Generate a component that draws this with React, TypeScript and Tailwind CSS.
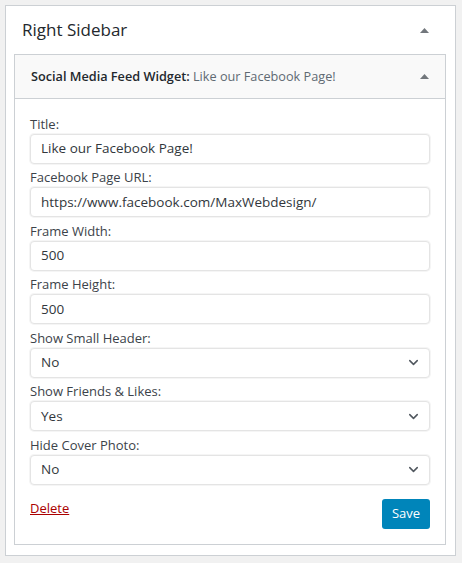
import { ChevronDown } from "lucide-react"

const font = { fontFamily: '"Open Sans", "Noto Sans", sans-serif' }

function Caret() {
    return (
        <svg width="9" height="5" viewBox="0 0 9 5" className="block">
            <path d="M0 5 L4.5 0 L9 5 Z" fill="#72777c" />
        </svg>
    )
}

function TextField({ label, value }: { label: string; value: string }) {
    return (
        <div>
            <label className="flex h-[23.5px] items-end pb-[1px] text-[13px] leading-[18px] text-[#3c434a]">{label}</label>
            <div className="flex h-[30px] items-center rounded-[4px] border border-[#e4e4e4] bg-white px-[10px] text-[13.5px] text-[#32373c] shadow-[0_0_0_1px_#f5f5f5]">
                {value}
            </div>
        </div>
    )
}

function SelectField({ label, value }: { label: string; value: string }) {
    return (
        <div>
            <label className="flex h-[23.5px] items-end pb-[1px] text-[13px] leading-[18px] text-[#3c434a]">{label}</label>
            <div className="flex h-[30px] items-center justify-between rounded-[4px] border border-[#e4e4e4] bg-white pl-[10px] pr-[8px] text-[13.5px] text-[#32373c] shadow-[0_0_0_1px_#f5f5f5]">
                <span>{value}</span>
                <ChevronDown className="h-[15px] w-[15px] text-[#50575e]" strokeWidth={2.4} />
            </div>
        </div>
    )
}

export default function App() {
    return (
        <div className="min-h-[563px] bg-[#f1f1f1] pt-[5px] pl-[5px]" style={font}>
            <div className="w-[451px] border border-[#ccd0d4] bg-white pb-[10px]">
                {/* Sidebar heading */}
                <div className="flex h-[48px] items-center justify-between pl-[16px] pr-[26px]">
                    <h2 className="text-[17px] text-[#23282d]">Right Sidebar</h2>
                    <Caret />
                </div>

                {/* Widget */}
                <div className="ml-[8px] w-[432px] border border-[#ccd0d4]">
                    <div className="flex h-[44px] items-center justify-between border-b border-[#ccd0d4] bg-[#f9f9f9] pl-[16px] pr-[16px]">
                        <h3 className="pt-[1px] text-[12.7px] text-[#23282d]">
                            <span className="font-semibold">Social Media Feed Widget:</span>{" "}
                            <span className="text-[#606a73]">Like our Facebook Page!</span>
                        </h3>
                        <Caret />
                    </div>

                    <div className="px-[15px] pt-[11px] pb-[15px]">
                        <TextField label="Title:" value="Like our Facebook Page!" />
                        <TextField label="Facebook Page URL:" value="https://www.facebook.com/MaxWebdesign/" />
                        <TextField label="Frame Width:" value="500" />
                        <TextField label="Frame Height:" value="500" />
                        <SelectField label="Show Small Header:" value="No" />
                        <SelectField label="Show Friends &amp; Likes:" value="Yes" />
                        <SelectField label="Hide Cover Photo:" value="No" />

                        <div className="mt-[14px] flex items-start justify-between">
                            <a className="text-[13px] leading-[18px] text-[#a00] underline">Delete</a>
                            <button className="h-[30px] w-[48px] rounded-[3px] bg-[#0085ba] text-[13px] text-white">Save</button>
                        </div>
                    </div>
                </div>
            </div>
        </div>
    )
}
